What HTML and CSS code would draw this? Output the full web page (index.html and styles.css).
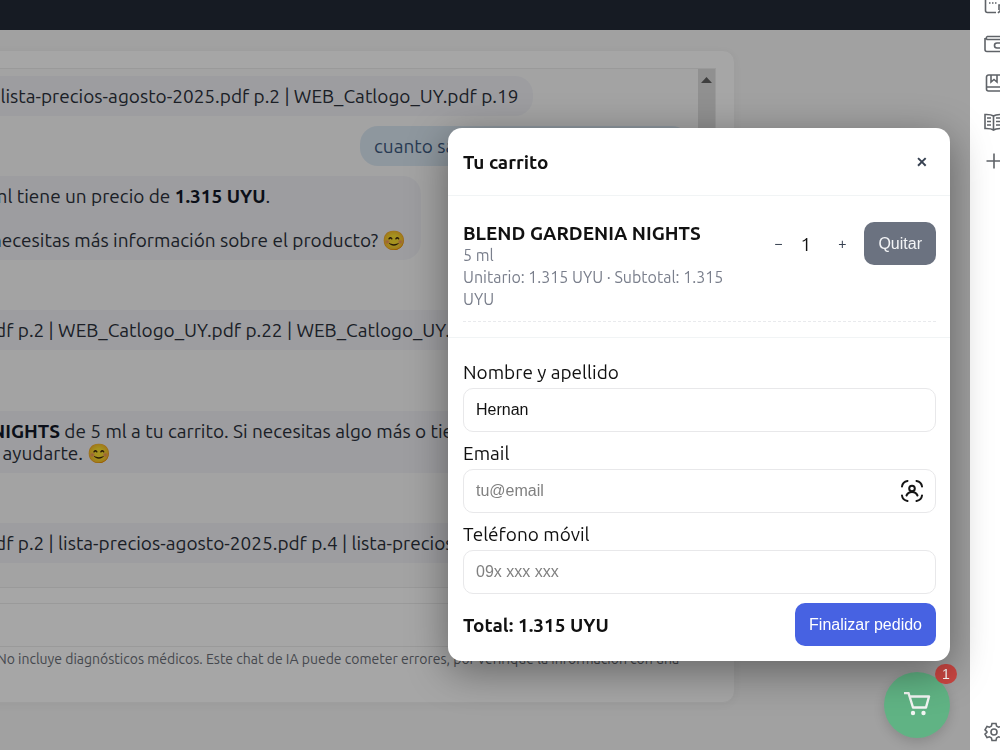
FILE: index.html
```html
<!DOCTYPE html>
<html lang="es">
<head>
  <meta charset="UTF-8">
  <meta name="viewport" content="width=device-width, initial-scale=1.0">
  <title>Tu carrito</title>
  <link rel="stylesheet" href="styles.css">
</head>
<body>
  <div class="app">
    <header class="topbar"></header>

    <main class="chat-card">
      <div class="chat-log">
        <div class="messages">
          <div class="msg">| lista-precios-agosto-2025.pdf p.2 | WEB_Catlogo_UY.pdf p.19</div>
          <div class="msg user">cuanto sale</div>
          <div class="msg answer">
            <p>ml tiene un precio de <strong>1.315 UYU</strong>.</p>
            <p>necesitas más información sobre el producto? 😊</p>
          </div>
          <div class="msg sources turn">pdf p.2 | WEB_Catlogo_UY.pdf p.22 | WEB_Catlogo_UY.pdf</div>
          <div class="msg turn-long"><strong>NIGHTS</strong> de 5 ml a tu carrito. Si necesitas algo más o tienes<br>r ayudarte. 😊</div>
          <div class="msg sources turn">pdf p.2 | lista-precios-agosto-2025.pdf p.4 | lista-precios</div>
        </div>
        <div class="scrollbar">
          <svg width="11" height="6" viewBox="0 0 11 6"><path d="M5.500 0 11 6H0z" fill="#606060"/></svg>
        </div>
      </div>
      <div class="composer"></div>
      <p class="disclaimer">. No incluye diagnósticos médicos. Este chat de IA puede cometer errores, por verifique la información con una</p>
    </main>

    <div class="backdrop"></div>
  </div>

  <aside class="side-panel">
    <svg class="side-icon" viewBox="0 0 20 20"><path d="M1.500 1v14.500a2 2 0 0 0 2 2H12M5 8h1.500M8 8h1.500M11 8h1.500M19 10h-4v5M14 18l5-5"/></svg>
    <svg class="side-icon" viewBox="0 0 20 20"><path d="M3 2.500h15v3M3 2.500a2 2 0 0 0 0 3h17M1 4v11.500a2 2 0 0 0 2 2h17M20 9h-7a2.500 2.500 0 0 0 0 5h7"/></svg>
    <svg class="side-icon" viewBox="0 0 20 20"><path d="M20 2H4.500a2 2 0 0 0-2 2v12a2 2 0 0 0 2 2H20M2.500 14H20M7 2v7l3-2.500L13 9V2"/></svg>
    <svg class="side-icon" viewBox="0 0 20 20"><path d="M9.500 4C7 2.200 4 2.500 1 2.500v14c3 0 6-.3 8.500 1.500 2.500-1.800 5.500-1.500 9-1.500v-14c-3.500 0-6.500-.3-9 1.500v14M3 6h4M3 9.500h4M3 13h4M12 6h4M12 9.500h4M12 13h4"/></svg>
    <svg class="side-icon" viewBox="0 0 20 20"><path d="M10 2.500v15M2.500 10h15"/></svg>
    <svg class="side-icon settings" viewBox="0 0 20 20"><path d="M8 1.500h4l.6 2.600 1.900 1.100 2.500-.8 2 3.400-1.900 1.800v.8l1.900 1.800-2 3.400-2.500-.8-1.900 1.100-.6 2.600H8l-.6-2.600-1.900-1.100-2.500.8-2-3.400 1.900-1.800v-.8L1 7.800l2-3.400 2.500.8 1.900-1.100z"/><circle cx="10" cy="10" r="3"/></svg>
  </aside>

  <button class="cart-fab" aria-label="Abrir carrito">
    <svg width="28" height="26" viewBox="0 0 28 26" fill="none" stroke="#f3f5f3" stroke-width="2.400" stroke-linejoin="round">
      <path d="M1 1h4.500l4.500 14.500h13l3-11H6.500"/>
      <circle cx="10" cy="21" r="2.200" fill="#f3f5f3" stroke="none"/>
      <circle cx="20.500" cy="21" r="2.200" fill="#f3f5f3" stroke="none"/>
    </svg>
    <span class="cart-badge">1</span>
  </button>

  <section class="cart" role="dialog" aria-labelledby="cart-title">
    <header class="cart-header">
      <h2 id="cart-title">Tu carrito</h2>
      <button class="icon-btn close" aria-label="Cerrar">✕</button>
    </header>

    <div class="cart-items">
      <div class="cart-item">
        <div class="item-info">
          <strong>BLEND GARDENIA NIGHTS</strong>
          <div class="item-meta">5 ml</div>
          <div class="item-meta">Unitario: 1.315 UYU · Subtotal: 1.315 UYU</div>
        </div>
        <div class="item-actions">
          <button class="icon-btn" aria-label="Restar">−</button>
          <span class="qty">1</span>
          <button class="icon-btn" aria-label="Sumar">+</button>
          <button class="btn btn-muted">Quitar</button>
        </div>
      </div>
    </div>

    <form class="cart-form">
      <label for="name">Nombre y apellido</label>
      <input type="text" id="name" value="Hernan">
      <label for="email">Email</label>
      <div class="field">
        <input type="email" id="email" placeholder="tu@email">
        <svg class="autofill" width="22" height="22" viewBox="0 0 22 22" fill="none" stroke="#151515" stroke-width="2" stroke-linecap="round">
          <path d="M1 6.500Q1.500 2 6.500 1M15.500 1Q20.500 2 21 6.500M21 15.500Q20.500 20 15.500 21M6.500 21Q1.500 20 1 15.500"/>
          <circle cx="11" cy="8.500" r="2.800"/>
          <path d="M5.500 15.500Q7 12 11 12t5.500 3.500"/>
        </svg>
      </div>
      <label for="phone">Teléfono móvil</label>
      <input type="tel" id="phone" placeholder="09x xxx xxx">
      <div class="cart-total">
        <strong>Total: 1.315 UYU</strong>
        <button type="button" class="btn btn-primary">Finalizar pedido</button>
      </div>
    </form>
  </section>
</body>
</html>
```
FILE: styles.css
```css
* {
  box-sizing: border-box;
}

body {
  margin: 0;
  height: 100vh;
  display: flex;
  overflow: hidden;
  background: #fff;
  color: #111;
  font-family: Ubuntu, "Noto Sans", sans-serif;
  font-size: 19px;
  line-height: 22px;
}

p,
h2 {
  margin: 0;
}

button,
input {
  font-family: "Liberation Sans", Arial, sans-serif;
  font-size: 16px;
}

button {
  border: none;
  cursor: pointer;
}

.app {
  position: relative;
  flex: 1;
  min-width: 0;
  overflow: hidden;
  background: #f7f7f7;
}

.topbar {
  height: 30px;
  background: #222a37;
}

.backdrop {
  position: absolute;
  inset: 0;
  background: rgba(0, 0, 0, 0.35);
}

/* chat */

.chat-card {
  margin: 20px 235px 0 -31px;
  padding: 17px 18px 32px 20px;
  background: #fff;
  border: 1px solid #f3f3f3;
  border-radius: 12px;
  box-shadow: 0 2px 8px rgba(0, 0, 0, 0.04);
}

.chat-log {
  display: flex;
  height: 520px;
  background: #fbfbfb;
  border: 1px solid #ededed;
  overflow: hidden;
}

.messages {
  flex: 1;
  min-width: 0;
  display: flex;
  flex-direction: column;
  align-items: flex-start;
  gap: 10px;
  padding: 7px 8px 0 0;
  color: #2b303b;
}

.msg {
  padding: 9px 15px 9px 0;
  background: #f1f2f6;
  border-radius: 0 18px 18px 0;
  white-space: nowrap;
}

.msg strong {
  color: #111827;
}

.msg.user {
  align-self: flex-end;
  width: 330px;
  padding-left: 14px;
  border-radius: 18px;
  background: #dbe8f3;
  color: #3d5a80;
}

.sources {
  text-indent: -7px;
}

.answer p + p {
  margin-top: 22px;
}

.turn {
  margin-top: 40px;
}

.turn-long {
  margin-top: 51px;
}

.scrollbar {
  width: 17px;
  padding-top: 4px;
  background: #dedede;
  text-align: center;
  line-height: 6px;
}

.composer {
  height: 44px;
  margin-top: 15px;
  border: 1px solid #ededed;
  border-radius: 8px;
}

.disclaimer {
  margin-top: 1px;
  color: #6b6f78;
  font-size: 14px;
  white-space: nowrap;
}

/* browser side panel */

.side-panel {
  width: 30px;
  padding-left: 14px;
  padding-bottom: 8px;
  display: flex;
  flex-direction: column;
  gap: 19px;
  margin-top: -5px;
  overflow: hidden;
  background: #fff;
}

.side-icon {
  width: 20px;
  height: 20px;
  flex: none;
  fill: none;
  stroke: #5f6368;
  stroke-width: 1.6;
}

.settings {
  margin-top: auto;
}

/* cart button */

.cart-fab {
  position: fixed;
  right: 50px;
  bottom: 12px;
  width: 66px;
  height: 66px;
  padding: 0;
  display: flex;
  align-items: center;
  justify-content: center;
  border-radius: 50%;
  background: #60b384;
  box-shadow: 0 4px 12px rgba(0, 0, 0, 0.15);
}

.cart-badge {
  position: absolute;
  top: -8px;
  right: -7px;
  min-width: 22px;
  height: 20px;
  border-radius: 10px;
  background: #cb4642;
  color: #fff;
  font-size: 14px;
  line-height: 20px;
}

/* cart dialog */

.cart {
  position: fixed;
  right: 50px;
  bottom: 89px;
  width: 502px;
  max-width: 90vw;
  background: #fff;
  border-radius: 14px;
  box-shadow: 0 10px 40px rgba(0, 0, 0, 0.4);
}

.cart-header {
  display: flex;
  align-items: center;
  justify-content: space-between;
  height: 68px;
  padding: 0 14px 0 15px;
  border-bottom: 1px solid #f1f4f5;
}

.cart-header h2 {
  font-size: 19px;
}

.icon-btn {
  width: 28px;
  height: 28px;
  padding: 0;
  background: none;
  color: #374151;
  font-size: 14px;
}

.close {
  font-weight: bold;
}

.cart-items {
  padding: 26px 14px 15px 15px;
  border-bottom: 1px solid #f1f4f5;
}

.cart-item {
  display: flex;
  align-items: flex-start;
  gap: 12px;
  padding-bottom: 11px;
  border-bottom: 1px dashed #e9eaed;
}

.item-info {
  flex: 1;
}

.item-meta {
  color: #7a7f8c;
  font-size: 16px;
}

.item-actions {
  display: flex;
  align-items: center;
  gap: 8px;
}

.qty {
  width: 20px;
}

.btn {
  height: 43px;
  padding: 0 14px;
  border-radius: 10px;
  color: #fff;
}

.btn-muted {
  background: #6b7280;
  color: #f3f4f6;
}

.btn-primary {
  background: #4762e2;
}

.cart-form {
  display: flex;
  flex-direction: column;
  gap: 5px;
  padding: 18px 14px 15px 15px;
}

.cart-form label {
  padding-top: 5px;
}

.cart-form input {
  width: 100%;
  height: 44px;
  padding: 0 12px;
  border: 1px solid #e8e8ea;
  border-radius: 10px;
  background: #fff;
  color: #111;
}

.cart-form input::placeholder {
  color: #808080;
}

.field {
  position: relative;
  display: flex;
}

.autofill {
  position: absolute;
  top: 11px;
  right: 13px;
}

.cart-total {
  display: flex;
  align-items: center;
  justify-content: space-between;
  padding-top: 4px;
}
```
